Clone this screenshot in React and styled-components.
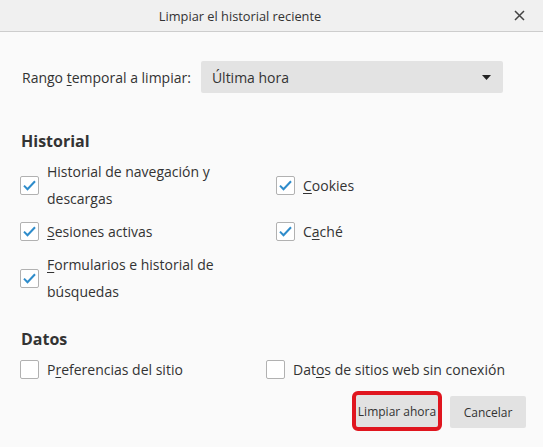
import React from 'react';
import styled, { createGlobalStyle } from 'styled-components';

const GlobalStyle = createGlobalStyle`
    html, body {
        margin: 0;
        padding: 0;
        background: #fafafa;
    }
    body {
        font-family: "Open Sans", "Noto Sans", sans-serif;
        color: #333;
    }
`;

const Dialog = styled.div`
    width: 543px;
    height: 447px;
    background: #fafafa;
    display: flex;
    flex-direction: column;
    overflow: hidden;
`;

const TitleBar = styled.div`
    height: 32px;
    flex-shrink: 0;
    background: #f0f0f0;
    border-bottom: 1px solid #cdcdcd;
    display: grid;
    grid-template-columns: 480px 1fr;
    align-items: center;
    box-sizing: border-box;
    .title {
        justify-self: center;
        font-size: 12.8px;
        color: #333;
    }
    .close {
        justify-self: end;
        width: 30px;
        height: 30px;
        margin-right: 9px;
        display: flex;
        align-items: center;
        justify-content: center;
    }
`;

const Body = styled.div`
    padding: 0 17px 0 20px;
    display: flex;
    flex-direction: column;
`;

const RangeRow = styled.div`
    margin-top: 29px;
    display: flex;
    align-items: center;
    gap: 10px;
    padding-left: 2px;
    font-size: 14px;
    u {
        text-underline-offset: 2px;
    }
`;

const Select = styled.div`
    width: 302px;
    height: 32px;
    box-sizing: border-box;
    background: #e3e3e3;
    border-radius: 2px;
    display: flex;
    align-items: center;
    justify-content: space-between;
    padding: 0 12px 0 11px;
    font-size: 14px;
`;

const Heading = styled.div`
    margin-top: ${props => props.top}px;
    margin-bottom: 6px;
    font-size: 16px;
    font-weight: 700;
    line-height: 22px;
    padding-left: 1px;
`;

const Grid = styled.div`
    display: grid;
    grid-template-columns: ${props => props.split}px 1fr;
    row-gap: 6px;
    span.text {
        max-width: ${props => props.wrap}px;
    }
`;

const Item = styled.label`
    display: flex;
    align-items: center;
    gap: 8px;
    font-size: 14px;
    line-height: 27px;
    u {
        text-decoration-thickness: 1px;
        text-underline-offset: 2px;
    }
`;

const Box = styled.span`
    width: 19px;
    height: 19px;
    flex-shrink: 0;
    box-sizing: border-box;
    border: 1px solid #b1b1b1;
    border-radius: 2px;
    background: #fff;
    display: flex;
    align-items: center;
    justify-content: center;
`;

const Buttons = styled.div`
    margin-top: 13px;
    display: flex;
    justify-content: flex-end;
    gap: 12px;
`;

const Button = styled.button`
    height: 32px;
    padding: 0;
    width: ${props => props.w}px;
    border: none;
    border-radius: 2px;
    background: #e2e2e2;
    font-family: "Open Sans", "Noto Sans", sans-serif;
    font-size: 12px;
    color: #333;
    outline: ${props => (props.marked ? '4px solid #e0161f' : 'none')};
    margin-top: ${props => (props.marked ? '-1px' : '0')};
`;

const CheckBox = ({ checked }) => (
    <Box>
        {checked && (
            <svg width="15" height="15" viewBox="0 0 15 15">
                <polyline points="2,7.6 5.5,11.2 13,3.2" fill="none" stroke="#2e8ccb" strokeWidth="2" />
            </svg>
        )}
    </Box>
);

const Option = ({ checked, children }) => (
    <Item>
        <CheckBox checked={checked} />
        <span className="text">{children}</span>
    </Item>
);

const App = () => {
    return (
        <Dialog>
            <GlobalStyle />
            <TitleBar>
                <div className="title">Limpiar el historial reciente</div>
                <div className="close">
                    <svg width="11" height="11" viewBox="0 0 11 11">
                        <path d="M1 1L10 10M10 1L1 10" stroke="#444" strokeWidth="1.5" />
                    </svg>
                </div>
            </TitleBar>
            <Body>
                <RangeRow>
                    <span>Rango <u>t</u>emporal a limpiar:</span>
                    <Select>
                        <span>Última hora</span>
                        <svg width="9" height="5" viewBox="0 0 9 5">
                            <path d="M0 0H9L4.5 5Z" fill="#222" />
                        </svg>
                    </Select>
                </RangeRow>
                <Heading top={37}>Historial</Heading>
                <Grid split={256} wrap={200}>
                    <Option checked>Historial de nave<u>g</u>ación y descargas</Option>
                    <Option checked><u>C</u>ookies</Option>
                    <Option checked><u>S</u>esiones activas</Option>
                    <Option checked>C<u>a</u>ché</Option>
                    <Option checked><u>F</u>ormularios e historial de búsquedas</Option>
                </Grid>
                <Heading top={23}>Datos</Heading>
                <Grid split={246} wrap={260}>
                    <Option>P<u>r</u>eferencias del sitio</Option>
                    <Option>Dat<u>o</u>s de sitios web sin conexión</Option>
                </Grid>
                <Buttons>
                    <Button w={82} marked>Limpiar ahora</Button>
                    <Button w={76}>Cancelar</Button>
                </Buttons>
            </Body>
        </Dialog>
    );
};

export default App;
